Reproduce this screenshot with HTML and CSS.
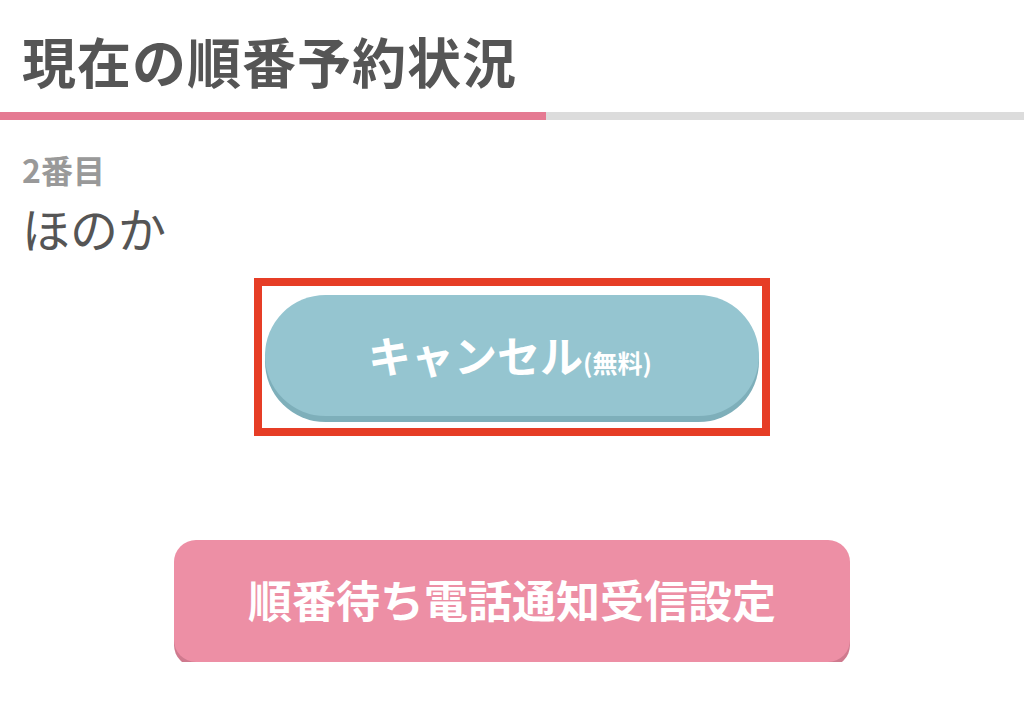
FILE: index.html
```html
<!DOCTYPE html>
<html lang="ja">
<head>
  <meta charset="UTF-8" />
  <meta name="viewport" content="width=device-width, initial-scale=1.0"/>
  <title>現在の順番予約状況</title>
  <link rel="stylesheet" href="styles.css">
</head>
<body>
  <header class="page-header">
    <h1 class="page-title">現在の順番予約状況</h1>
  </header>
  <div class="progress">
    <div class="progress-fill"></div>
  </div>

  <section class="status">
    <p class="status-order">2番目</p>
    <p class="status-name">ほのか</p>
  </section>

  <div class="actions">
    <div class="highlight">
      <button class="btn-cancel" type="button">キャンセル<small>(無料)</small></button>
    </div>
    <button class="btn-notify" type="button">順番待ち電話通知受信設定</button>
  </div>
</body>
</html>
```

FILE: styles.css
```css
body {
  font-family: "Noto Sans CJK JP", "Noto Sans", sans-serif;
  background-color: #ffffff;
  margin: 0;
  color: #555555;
}

.page-header {
  height: 112px;
  padding: 34px 0 0 22px;
  box-sizing: border-box;
}

.page-title {
  margin: 0;
  font-size: 54px;
  line-height: 54px;
  font-weight: 700;
  color: #555555;
  letter-spacing: 1px;
}

.progress {
  height: 8px;
  background-color: #dcdcdc;
}

.progress-fill {
  width: 546px;
  height: 100%;
  background-color: #e57a92;
}

.status {
  padding: 33px 0 0 22px;
}

.status p {
  margin: 0;
}

.status-order {
  font-size: 32px;
  line-height: 32px;
  font-weight: 700;
  color: #999999;
}

.status-name {
  margin-top: 18px !important;
  font-size: 48px;
  line-height: 48px;
  color: #555555;
}

.actions {
  display: flex;
  flex-direction: column;
  align-items: center;
  padding-top: 27px;
}

.highlight {
  width: 516px;
  height: 158px;
  border: 8px solid #e63d26;
  box-sizing: border-box;
  padding: 9px 3px 0;
}

button {
  font-family: inherit;
  border: none;
  color: #ffffff;
  font-weight: 700;
  cursor: pointer;
}

.btn-cancel {
  display: block;
  width: 494px;
  height: 121px;
  border-radius: 61px;
  background-color: #95c5d0;
  box-shadow: 0 6px 0 #7eafba;
  font-size: 43px;
  padding: 0 4px 4px 0;
}

.btn-cancel small {
  font-size: 25px;
}

.btn-notify {
  margin-top: 104px;
  width: 676px;
  height: 122px;
  border-radius: 22px;
  background-color: #ed8fa5;
  box-shadow: 0 5px 0 #cf7a8e;
  font-size: 44px;
  padding: 0 0 4px;
}
```
